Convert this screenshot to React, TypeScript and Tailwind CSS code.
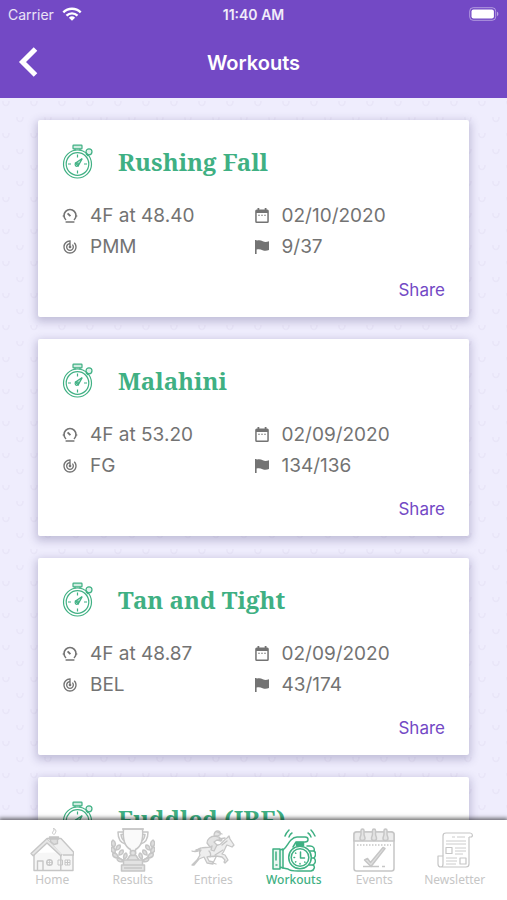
import { ReactNode } from "react";
import { MdTrackChanges } from "react-icons/md";

interface IWorkout {
  horse: string;
  details?: { time: string; track: string; date: string; rank: string };
}

const workouts: IWorkout[] = [
  {
    horse: "Rushing Fall",
    details: { time: "4F at 48.40", track: "PMM", date: "02/10/2020", rank: "9/37" },
  },
  {
    horse: "Malahini",
    details: { time: "4F at 53.20", track: "FG", date: "02/09/2020", rank: "134/136" },
  },
  {
    horse: "Tan and Tight",
    details: { time: "4F at 48.87", track: "BEL", date: "02/09/2020", rank: "43/174" },
  },
  { horse: "Fuddled (IRE)" },
];

const Stopwatch = () => (
  <svg viewBox="0 0 32 36" className="h-9 w-8 shrink-0" fill="none" stroke="currentColor" strokeWidth="1.2">
    <circle cx="15.5" cy="20" r="14" />
    <circle cx="15.5" cy="20" r="11.3" />
    <rect x="11" y="1.2" width="9" height="3.6" rx="0.6" fill="currentColor" fillOpacity=".25" />
    <path d="M13 4.8v1.8M18 4.8v1.8" />
    <circle cx="27" cy="7.8" r="3" fill="currentColor" fillOpacity=".15" />
    <path d="m23.8 9.6 2.4 2.4" />
    <path d="M15.5 10.5v3M15.5 26.5v3M6 20h3M22 20h3" />
    <path d="M20.2 14.6 13.4 19l2.8 3z" fill="currentColor" fillOpacity=".35" />
    <circle cx="14.8" cy="20.6" r="1.7" />
  </svg>
);

const Gauge = () => (
  <svg viewBox="0 0 16 16" className="size-4" fill="none" stroke="currentColor" strokeWidth="1.6">
    <path d="M4 12a6 6 0 1 1 8 0" />
    <path d="M3.6 14h8.8" strokeWidth="1.5" />
    <path d="M5.6 5.4 8.4 8.2" strokeWidth="1.9" />
    <path d="M.6 8h2M13.4 8h2" strokeWidth="1" />
  </svg>
);

const Calendar = () => (
  <svg viewBox="0 0 16 16" className="size-4" fill="currentColor">
    <path d="M3.500 0h1.800v1.500h5.400V0h1.800v1.500h.8A1.500 1.500 0 0 1 14.800 3v10.500a1.500 1.500 0 0 1-1.500 1.500H2.700a1.500 1.500 0 0 1-1.500-1.500V3a1.500 1.500 0 0 1 1.500-1.500h.8zM2.700 5v8.500h10.600V5z" fillRule="evenodd" />
    <path d="M4.200 6.800h1.600v1H4.200zM7.200 6.800h1.600v1H7.200zM10.200 6.800h1.600v1h-1.600z" />
  </svg>
);

const Flag = () => (
  <svg viewBox="0 0 16 16" className="size-4" fill="currentColor">
    <path d="M1 1h1.600v.8c2.600-.9 4.400-.3 6.200.5 2 .9 3.800.7 6.200 0v8.800c-2.400.9-4.400.9-6.400.1-2-.8-3.600-1.200-6-.6V15H1z" />
  </svg>
);

const HomeIcon = () => (
  <svg viewBox="0 0 44 44" className="size-11" fill="none" stroke="currentColor" strokeWidth="1.4" strokeLinejoin="round">
    <path d="M4 25v17.5h39V24" fill="#f6f6f6" />
    <path d="M1 25.5 17 10.5l16 15-2.2 2.2L17 15 3.2 27.8z" fill="#e6e6e6" />
    <path d="M17 10.5h14l12.5 13.5v3H33" fill="#f0f0f0" />
    <path d="M30.8 27.7V42.5M7.5 42.5v-9.5h5.5v9.5" />
    <circle cx="19.5" cy="34.5" r="2.8" />
    <path d="M19.5 31.7v5.6M16.7 34.5h5.6" strokeWidth=".8" />
    <path d="M28 32h4.5v5H28zM35 32h5v5h-5zM37.5 32v5M35 34.5h5" strokeWidth="1" />
    <path d="M20.5 10.5h7v5l-3.5 1-3.5-3zM19.5 9h9v2h-9z" fill="#ddd" />
    <path d="M23.5 6.5c-3-3 2-3 0-6.5 4 3 2 4 1 6.5" strokeWidth="1" />
  </svg>
);

const TrophyIcon = () => (
  <svg viewBox="0 0 44 44" className="size-11" fill="none" stroke="currentColor" strokeWidth="1.5" strokeLinejoin="round">
    <path d="M3 13c-2 11 3 18 12 20M41 13c2 11-3 18-12 20" />
    <path d="M3 19c-4-2-3-5-1-7 3 2 3 5 1 7zM3.500 25c-4-1-4-4-2.500-6 3 1 4 4 2.500 6zM7 30c-4 0-6-2-5-5 3 0 5 2 5 5zM12 33.500c-4 1-6-1-6-3 3-1 5 1 6 3zM5 22c0-4 2-5 4-5 1 3-1 5-4 5zM8 27c0-4 2-5 4-5 1 3-1 5-4 5zM13 31c-1-3 0-5 2-6 2 2 1 5-2 6z" fill="#ddd" />
    <path d="M41 19c4-2 3-5 1-7-3 2-3 5-1 7zM40.500 25c4-1 4-4 2.500-6-3 1-4 4-2.500 6zM37 30c4 0 6-2 5-5-3 0-5 2-5 5zM32 33.500c4 1 6-1 6-3-3-1-5 1-6 3zM39 22c0-4-2-5-4-5-1 3 1 5 4 5zM36 27c0-4-2-5-4-5-1 3 1 5 4 5zM31 31c1-3 0-5-2-6-2 2-1 5 2 6z" fill="#ddd" />
    <path d="M12.500 1h19c1 11-2 18-7 20.500v4h-5v-4c-5-2.500-8-9.500-7-20.500z" fill="#fafafa" />
    <path d="M11 1h22M12.500 4H7c0 7 3 11 7.500 12M31.500 4H37c0 7-3 11-7.500 12M12.600 6.500H10c.5 4 1.800 5.500 3.200 6.500M31.400 6.500H34c-.5 4-1.800 5.500-3.200 6.500" />
    <circle cx="22" cy="25" r="2.600" fill="#e2e2e2" />
    <path d="M19 27.500h6l3 4.500H16zM12.500 32h19v5h-19zM10.500 37h23v6h-23z" fill="#e2e2e2" />
    <path d="M13 40h18" />
  </svg>
);

const HorseIcon = () => (
  <svg viewBox="0 0 44 44" className="size-11" fill="none" stroke="currentColor" strokeWidth="1.3" strokeLinejoin="round" strokeLinecap="round">
    <path d="M1 23c4 2 5-2 9-3 3-1 6 0 9-1l8-2c4 0 5-5 9-7l2-2 1 3 4 6-2 2-5-2c-2 2-2 6-5 9l3 1 3 5-3 3-1-1 1-2-3-3-6-1c-4 1-8 0-9 1l2 4 4 1v2l-6-1-3-6-5 2-5 6H1l5-5 3-5c-1-2 0-4 1-5-3 1-5 3-9 1z" fill="#eee" />
    <path d="M19 19l-3-4c0-4 4-7 8-7l4 1 3 3-1 1-4-1-3 2 3 3-3 6-3-1 1-4zM23 8c0-3 1-5 4-5 2 0 3 2 2 4l-3 1zM26 4l5 2M28 11l6-1" fill="#e4e4e4" />
    <path d="M5 22l4-1M25 29l-3 6 3 1M32 22l-8 5M18 23c2 2 2 4 1 6M31 17l5-4" />
  </svg>
);

const WorkoutsIcon = () => (
  <svg viewBox="0 0 44 44" className="size-11" fill="none" stroke="currentColor" strokeWidth="1.5" strokeLinejoin="round" strokeLinecap="round">
    <path d="M1 21h7v20H1zM8 22l3-1v19l-3-1M4 24v8M4 37h1" fill="currentColor" fillOpacity=".1" />
    <path d="M11 22c4-3 5-7 8-10 2-2 4-3 6-3h8c4 0 4 5 0 5h-9l-3 5" />
    <path d="M11 40l5 1c2 2 5 2 10 2h13c4-1 4-5 2-6 3-2 3-5 1-7 2-2 2-6 0-7 1-3-1-5-4-5h-3" />
    <path d="M37 23h5M39 30h3M37 37h4" />
    <path d="M24.500 14.500h7v3h-7z" fill="currentColor" />
    <circle cx="28" cy="29.500" r="11.300" fill="#fff" />
    <circle cx="28" cy="29.500" r="8.800" />
    <path d="M28.500 24v6h4M22 29.500h.6M28 35.500v.5M23.500 34l.3-.3M33 34.300l-.3-.3M23.500 25l.3.3" />
    <path d="M13 8c1-3 2-4 4-6M17 9c1-2 1-3 3-4M39 2c2 2 3 4 4 6M36 5c2 1 2 2 3 4" />
  </svg>
);

const EventsIcon = () => (
  <svg viewBox="0 0 44 44" className="size-11" fill="none" stroke="currentColor" strokeWidth="1.500" strokeLinejoin="round">
    <rect x="2" y="4" width="40" height="39" rx="2.500" />
    <path d="M2 13h40V6.500A2.500 2.500 0 0 0 39.500 4h-35A2.500 2.500 0 0 0 2 6.500z" fill="#ececec" />
    <path d="M5 17h34" strokeDasharray="1.500 1.500" />
    <path d="M8 10.500c0-2 1-2.500 1-4.500V2.500a1.500 1.500 0 0 1 3 0V6c0 2 1 2.500 1 4.500a2.500 2 0 0 1-5 0zM19.500 10.500c0-2 1-2.500 1-4.500V2.500a1.500 1.500 0 0 1 3 0V6c0 2 1 2.500 1 4.500a2.500 2 0 0 1-5 0zM31 10.500c0-2 1-2.500 1-4.500V2.500a1.500 1.500 0 0 1 3 0V6c0 2 1 2.500 1 4.500a2.500 2 0 0 1-5 0z" fill="#e4e4e4" />
    <path d="m12.500 32 3-1.500 3 4 12.500-15 2 1-14 18z" fill="#e0e0e0" />
    <path d="M11 38.500h16M30 38.500h3" />
  </svg>
);

const NewsletterIcon = () => (
  <svg viewBox="0 0 44 44" className="size-11" fill="none" stroke="currentColor" strokeWidth="1.200" strokeLinejoin="round">
    <path d="M10 28V8c0-2 1-3 3-3h24c3 0 3 4 1 4h-2" />
    <path d="M36 9v27c0 2-1 3-3 3H8c-2 0-3-1-3-3v-8h5v8c0 2-1 3-2 3" />
    <path d="M19 9h3M24 9h8M13 13h20M13 16h20M22 20h11M22 23h11M22 26h8M13 30h11M13 33h11M13 36h10" strokeWidth=".9" />
    <path d="M13 19.500h6v6h-6zM27 30h6v6h-6z" />
  </svg>
);

const tabs: { label: string; icon: ReactNode }[] = [
  { label: "Home", icon: <HomeIcon /> },
  { label: "Results", icon: <TrophyIcon /> },
  { label: "Entries", icon: <HorseIcon /> },
  { label: "Workouts", icon: <WorkoutsIcon /> },
  { label: "Events", icon: <EventsIcon /> },
  { label: "Newsletter", icon: <NewsletterIcon /> },
];

const Detail = ({ icon, children }: { icon: ReactNode; children: ReactNode }) => (
  <li className="flex h-[31px] items-center gap-3">
    {icon}
    <span className="leading-[31px]">{children}</span>
  </li>
);

const WorkoutCard = ({ workout: { horse, details } }: { workout: IWorkout }) => (
  <article className="rounded-xs bg-white px-6 pt-6 pb-[15px] shadow-[0_3px_9px_2px_rgba(60,50,110,0.25)]">
    <div className="flex h-9 items-center gap-6 text-[#3fb083]">
      <Stopwatch />
      <h2 className="font-['Noto_Serif','Droid_Serif','DejaVu_Serif',serif] text-[24px] leading-8 font-bold whitespace-nowrap">
        {horse}
      </h2>
    </div>
    {details && (
      <>
        <ul className="mt-5 grid grid-cols-2 text-[19px] text-[#737373]">
          <Detail icon={<Gauge />}>{details.time}</Detail>
          <Detail icon={<Calendar />}>{details.date}</Detail>
          <Detail icon={<MdTrackChanges className="size-4" />}>{details.track}</Detail>
          <Detail icon={<Flag />}>{details.rank}</Detail>
        </ul>
        <div className="mt-4 flex justify-end">
          <button type="button" className="h-6 text-[17px] leading-6 text-[#7349c5]">
            Share
          </button>
        </div>
      </>
    )}
  </article>
);

const App = () => {
  return (
    <div className="flex h-screen flex-col overflow-hidden bg-[#efedfd] font-['Inter',sans-serif]">
      <header className="shrink-0 bg-[#7349c5] text-white">
        <div className="grid h-7 grid-cols-3 items-center px-2 text-[14px]">
          <div className="flex items-center gap-2 text-white/85">
            <span>Carrier</span>
            <svg viewBox="0 0 20 14" className="h-3.5 w-5" fill="none" stroke="#fff" strokeWidth="2.4">
              <path d="M1.300 5.300a12.500 12.500 0 0 1 17.400 0" />
              <path d="M4.500 8.600a8 8 0 0 1 11 0" />
              <path d="M10 13.700 6.900 10.700a4.500 4.500 0 0 1 6.200 0z" fill="#fff" stroke="none" />
            </svg>
          </div>
          <span className="text-center font-semibold text-white/90">11:40 AM</span>
          <svg viewBox="0 0 30 14" className="h-3.5 w-[30px] justify-self-end" fill="none">
            <rect x=".7" y=".7" width="26" height="12.600" rx="3.500" stroke="#fff" strokeOpacity=".45" />
            <rect x="2.500" y="2.500" width="22.400" height="9" rx="2" fill="#fff" />
            <path d="M28 4.800c1.800.6 1.800 3.800 0 4.400z" fill="#fff" fillOpacity=".5" />
          </svg>
        </div>
        <div className="grid h-[70px] grid-cols-[1fr_auto_1fr] items-center px-4">
          <button type="button" aria-label="Back" className="justify-self-start">
            <svg viewBox="0 0 24 32" className="h-8 w-6" fill="none" stroke="#fff" strokeWidth="5">
              <path d="M19.500 2 6.500 15 19.500 28" />
            </svg>
          </button>
          <h1 className="text-[20px] leading-7 font-semibold">Workouts</h1>
        </div>
      </header>

      <main className="relative min-h-0 flex-1 overflow-hidden">
        <svg className="absolute inset-0 size-full" aria-hidden="true">
          <pattern id="horseshoes" width="28" height="32" patternUnits="userSpaceOnUse">
            <g fill="none" stroke="#e9e6f8" strokeWidth="1.600">
              <path d="M3 3c-1 6 6 6 6 0" />
              <path d="M17 19c-1 6 6 6 6 0" />
            </g>
          </pattern>
          <rect width="100%" height="100%" fill="url(#horseshoes)" />
        </svg>
        <div className="relative flex flex-col gap-[22px] px-[38px] pt-[22px]">
          {workouts.map((workout) => (
            <WorkoutCard key={workout.horse} workout={workout} />
          ))}
        </div>
      </main>

      <nav className="relative grid h-20 shrink-0 grid-cols-6 bg-white px-3 pt-2 shadow-[0_-1px_4px_1px_rgba(0,0,0,0.55)]">
        {tabs.map((tab) => (
          <a
            key={tab.label}
            href="#"
            aria-current={tab.label === "Workouts" ? "page" : undefined}
            className="flex flex-col items-center font-['Noto_Sans',sans-serif] text-[12px] leading-4 text-[#c6c6c6] aria-[current=page]:font-medium aria-[current=page]:text-[#3fb083]"
          >
            {tab.icon}
            <span>{tab.label}</span>
          </a>
        ))}
      </nav>
    </div>
  );
};

export default App;
